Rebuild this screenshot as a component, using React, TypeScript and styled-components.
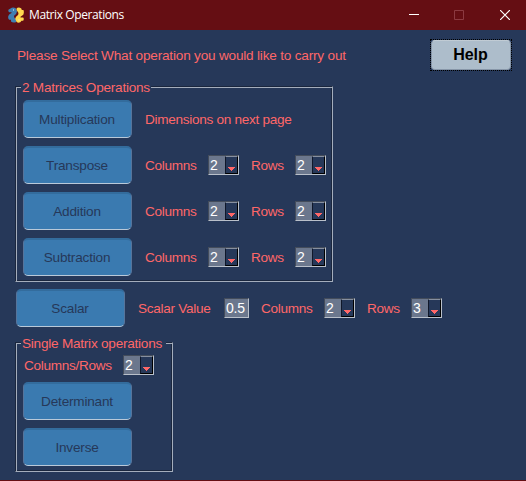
import React from "react";
import styled, { createGlobalStyle } from "styled-components";

const GlobalStyle = createGlobalStyle`
  *, *::before, *::after { box-sizing: border-box; }
  body { margin: 0; background: #263859; }
`;

const Window = styled.div`
  width: 526px;
  height: 481px;
  overflow: hidden;
  display: flex;
  flex-direction: column;
  background: #263859;
  border-bottom: 1px solid #650e13;
  font-family: "Liberation Sans", Arial, sans-serif;
  font-size: 13.6px;
  line-height: 16px;
  letter-spacing: -0.3px;
  color: #ff6768;
`;

const TitleBar = styled.header`
  display: flex;
  align-items: center;
  flex: none;
  height: 30px;
  padding-left: 8px;
  background: #650e13;
`;

const Title = styled.h1`
  flex: 1;
  margin: 0 0 0 5px;
  font: 400 12px/16px "Open Sans", sans-serif;
  letter-spacing: -0.4px;
  color: #fff;
`;

const WindowButton = styled.button<{ $dim?: boolean }>`
  display: flex;
  align-items: center;
  justify-content: center;
  width: 45px;
  height: 28px;
  padding: 0;
  border: 0;
  background: none;
  color: ${(p) => (p.$dim ? "#8c3a41" : "#fff")};

  &:last-child {
    padding-left: 2px;
  }
`;

const Content = styled.main`
  flex: 1;
  display: flex;
  flex-direction: column;
  align-items: flex-start;
  padding: 8px 14px 0 15px;
`;

const Intro = styled.div`
  display: flex;
  align-items: center;
  justify-content: space-between;
  width: 497px;
  height: 33px;
  padding-left: 2px;
`;

const HelpButton = styled.button`
  width: 82px;
  height: 32px;
  padding: 0;
  border: 1px dotted #000;
  background: #263859;
`;

const HelpFace = styled.span`
  display: flex;
  align-items: center;
  justify-content: center;
  height: 30px;
  padding-right: 1px;
  border: 1px solid #8796a8;
  border-top-color: #c0cbd4;
  border-radius: 4px;
  background: #adbdcb;
  font: 700 16px/18px "Liberation Sans", Arial, sans-serif;
  letter-spacing: 0;
  color: #000;
`;

const Group = styled.section<{ $width: number; $height: number }>`
  width: ${(p) => p.$width}px;
  height: ${(p) => p.$height}px;
  margin-top: 15px;
  border: 1px solid #1a263d;
  border-right-color: #a4adbc;
  border-bottom-color: #a4adbc;
  box-shadow: inset 1px 1px #a4adbc, inset -1px -1px #1a263d;
  padding-left: 7px;
`;

const Legend = styled.h2<{ $width: number }>`
  width: ${(p) => p.$width}px;
  height: 16px;
  margin: -7px 0 0 -2px;
  padding-left: 1px;
  background: #263859;
  font-size: 13.6px;
  font-weight: 400;
  line-height: 16px;
  letter-spacing: -0.24px;
  white-space: nowrap;
`;

const Row = styled.div<{ $height?: number }>`
  display: flex;
  align-items: center;
  height: ${(p) => p.$height ?? 46}px;
`;

const ScalarRow = styled(Row)`
  height: 38px;
  margin: 7px 0 0 1px;
`;

const OperationButton = styled.button`
  width: 109px;
  height: 38px;
  padding: 1px 1px 0 0;
  border: 1px solid #57749a;
  border-top: 2px solid #336c9d;
  border-bottom: 1px solid #b9c9d9;
  border-radius: 5px;
  background: #3a7ab0;
  font: 400 13.6px/16px "Liberation Sans", Arial, sans-serif;
  letter-spacing: -0.2px;
  color: #263859;
`;

const Label = styled.label<{ $width?: number; $left?: number }>`
  flex: none;
  width: ${(p) => (p.$width ? `${p.$width}px` : "auto")};
  margin-left: ${(p) => p.$left ?? 0}px;
  padding-top: 1px;
  white-space: nowrap;
`;

const Prompt = styled.p`
  margin: 0;
  padding-top: 2px;
  letter-spacing: -0.2px;
`;

const Field = styled.div<{ $width: number }>`
  display: flex;
  flex: none;
  width: ${(p) => p.$width}px;
  height: 20px;
  border: 1px solid #434c5b;
  border-right-color: #b9c0ca;
  border-bottom-color: #b9c0ca;
  background: #6b778d;
`;

const Value = styled.span`
  flex: 1;
  padding-left: 1px;
  font-size: 14px;
  line-height: 19px;
  letter-spacing: -0.2px;
  color: #fff;
`;

const Arrow = styled.span`
  display: flex;
  justify-content: center;
  width: 13px;
  height: 18px;
  padding-top: 10px;
  border: 1px solid #8790a0;
  border-left-color: #10182a;
  border-right-color: #000;
  border-bottom-color: #000;
  background: #263859;
`;

function Combo({ value }: { value: string }) {
  return (
    <Field $width={31}>
      <Value>{value}</Value>
      <Arrow>
        <svg width="7" height="4" viewBox="0 0 7 4" shapeRendering="crispEdges">
          <path d="M0 0H7V1H6V2H5V3H4V4H3V3H2V2H1V1H0Z" fill="#ff6768" />
        </svg>
      </Arrow>
    </Field>
  );
}

function Dimensions({ columns, rows, left = 13 }: { columns: string; rows: string; left?: number }) {
  return (
    <>
      <Label $left={left} $width={63}>Columns</Label>
      <Combo value={columns} />
      <Label $left={12} $width={44}>Rows</Label>
      <Combo value={rows} />
    </>
  );
}

function SnakesIcon() {
  return (
    <svg width="16" height="16" viewBox="0 0 16 16">
      <path d="M2.5 1.5Q5 -.6 8 1.5L9 4.5Q8.7 7 6.3 8.5Q5.5 10 6.8 11.3L8.3 12.5V15Q5 16.3 3 14.5V12.8H1.2Q-.3 11.5 .3 9Q1 7 3.5 6V5.3H1.2Q-.3 4 .7 2.5Z" fill="#3f7fb2" />
      <path d="M8.8 1Q11 -.4 13.3 1.5L13.8 3H15.4Q16.4 5 15.3 7.8L12.5 9.7V10.5H15.2Q16.4 12 15.2 13.7H13.5L12.3 15.2Q10 16.3 8.5 14.8L7.2 11.8Q7.5 9.7 10 8Q11 6 9.7 4.8L8.5 3Z" fill="#ffd94f" />
      <path d="M5 3h1M10.5 13h1" stroke="#e9eef2" />
    </svg>
  );
}

export default function App() {
  return (
    <>
      <GlobalStyle />
      <Window>
        <TitleBar>
          <SnakesIcon />
          <Title>Matrix Operations</Title>
          <WindowButton aria-label="Minimize">
            <svg width="10" height="10" viewBox="0 0 10 10"><path d="M0 4.5H10" stroke="currentColor" /></svg>
          </WindowButton>
          <WindowButton $dim aria-label="Maximize">
            <svg width="10" height="10" viewBox="0 0 10 10"><path d="M.5.5H9.5V9.5H.5Z" fill="none" stroke="currentColor" /></svg>
          </WindowButton>
          <WindowButton aria-label="Close">
            <svg width="10" height="10" viewBox="0 0 10 10"><path d="M0 0L10 10M10 0L0 10" stroke="currentColor" strokeWidth="1.2" /></svg>
          </WindowButton>
        </TitleBar>
        <Content>
          <Intro>
            <Prompt>Please Select What operation you would like to carry out</Prompt>
            <HelpButton><HelpFace>Help</HelpFace></HelpButton>
          </Intro>
          <Group $width={318} $height={196}>
            <Legend $width={130}>2 Matrices Operations</Legend>
            <Row>
              <OperationButton>Multiplication</OperationButton>
              <Label $left={13}>Dimensions on next page</Label>
            </Row>
            {["Transpose", "Addition", "Subtraction"].map((name) => (
              <Row key={name}>
                <OperationButton>{name}</OperationButton>
                <Dimensions columns="2" rows="2" />
              </Row>
            ))}
          </Group>
          <ScalarRow>
            <OperationButton>Scalar</OperationButton>
            <Label $left={13} $width={86}>Scalar Value</Label>
            <Field $width={25}><Value>0.5</Value></Field>
            <Dimensions columns="2" rows="3" left={12} />
          </ScalarRow>
          <Group $width={158} $height={130}>
            <Legend $width={145}>Single Matrix operations</Legend>
            <Row $height={26}>
              <Label $left={1} $width={99}>Columns/Rows</Label>
              <Combo value="2" />
            </Row>
            <Row><OperationButton>Determinant</OperationButton></Row>
            <Row><OperationButton>Inverse</OperationButton></Row>
          </Group>
        </Content>
      </Window>
    </>
  );
}
